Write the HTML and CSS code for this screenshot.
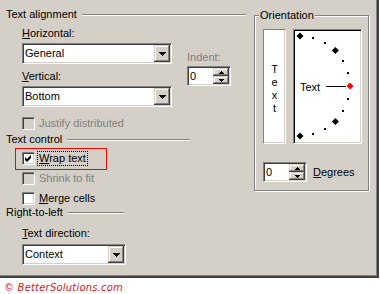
FILE: index.html
```html
<!DOCTYPE html>
<html lang="en">
<head>
  <meta charset="UTF-8">
  <title>Format Cells - Alignment</title>
  <link rel="stylesheet" href="styles.css">
</head>
<body>
  <div class="dialog">
    <div class="left">
      <div class="group-title title-align"><span>Text alignment</span><i class="rule"></i></div>
      <div class="align-body">
        <div class="align-main">
          <div class="label"><u>H</u>orizontal:</div>
          <div class="combo">
            <span class="combo-value">General</span>
            <span class="drop"><svg width="7" height="4" viewBox="0 0 7 4"><polygon points="0,0 7,0 3.5,4" /></svg></span>
          </div>
          <div class="label label-gap"><u>V</u>ertical:</div>
          <div class="combo">
            <span class="combo-value">Bottom</span>
            <span class="drop"><svg width="7" height="4" viewBox="0 0 7 4"><polygon points="0,0 7,0 3.5,4" /></svg></span>
          </div>
          <div class="check disabled justify"><span class="box"></span><span>Justify distributed</span></div>
        </div>
        <div class="indent">
          <div class="label disabled">Indent:</div>
          <div class="spin">
            <span class="spin-value">0</span>
            <span class="spin-btns">
              <span class="spin-btn"><svg width="5" height="3" viewBox="0 0 5 3"><polygon points="2.5,0 5,3 0,3" /></svg></span>
              <span class="spin-btn"><svg width="5" height="3" viewBox="0 0 5 3"><polygon points="0,0 5,0 2.5,3" /></svg></span>
            </span>
          </div>
        </div>
      </div>

      <div class="group-title title-control"><span>Text control</span><i class="rule"></i></div>
      <div class="checks">
        <div class="check wrap-row">
          <span class="box"><svg width="9" height="9" viewBox="0 0 9 9"><path d="M1 3 L3 5 L7 1 L7 4 L3 8 L1 6 Z" /></svg></span>
          <span class="focus"><u>W</u>rap text</span>
          <span class="mark"></span>
        </div>
        <div class="check disabled"><span class="box"></span><span>Shrink to fit</span></div>
        <div class="check"><span class="box"></span><span><u>M</u>erge cells</span></div>
      </div>

      <div class="group-title title-rtl"><span>Right-to-left</span><i class="rule"></i></div>
      <div class="rtl-body">
        <div class="label"><u>T</u>ext direction:</div>
        <div class="combo combo-short">
          <span class="combo-value">Context</span>
          <span class="drop"><svg width="7" height="4" viewBox="0 0 7 4"><polygon points="0,0 7,0 3.5,4" /></svg></span>
        </div>
      </div>
    </div>

    <div class="right">
      <div class="orient">
        <span class="legend">Orientation</span>
        <div class="orient-row">
          <div class="vtext"><span>T</span><span>e</span><span>x</span><span>t</span></div>
          <div class="arc">
            <svg width="65" height="111" viewBox="0 0 65 111">
              <polygon points="5,1.5 8.5,5 5,8.5 1.5,5" />
              <polygon points="40.4,16.1 43.9,19.6 40.4,23.1 36.9,19.6" />
              <polygon points="40.4,86.9 43.9,90.4 40.4,93.9 36.9,90.4" />
              <polygon points="5,101.5 8.5,105 5,108.5 1.5,105" />
              <rect x="17" y="6" width="2" height="2" />
              <rect x="29" y="11" width="2" height="2" />
              <rect x="47" y="29" width="2" height="2" />
              <rect x="52" y="41" width="2" height="2" />
              <rect x="52" y="67" width="2" height="2" />
              <rect x="47" y="79" width="2" height="2" />
              <rect x="29" y="97" width="2" height="2" />
              <rect x="17" y="102" width="2" height="2" />
              <text x="5" y="60" class="arc-label">Text</text>
              <rect x="31" y="55" width="20" height="1" />
              <polygon points="55,51.5 58.5,55 55,58.5 51.5,55" fill="#ff0000" />
            </svg>
          </div>
        </div>
        <div class="degrees-row">
          <div class="spin">
            <span class="spin-value">0</span>
            <span class="spin-btns">
              <span class="spin-btn"><svg width="5" height="3" viewBox="0 0 5 3"><polygon points="2.5,0 5,3 0,3" /></svg></span>
              <span class="spin-btn"><svg width="5" height="3" viewBox="0 0 5 3"><polygon points="0,0 5,0 2.5,3" /></svg></span>
            </span>
          </div>
          <span><u>D</u>egrees</span>
        </div>
      </div>
    </div>
  </div>

  <div class="credit">© BetterSolutions.com</div>
</body>
</html>
```

FILE: styles.css
```css
* {
  box-sizing: border-box;
}
body {
  margin: 0;
  background: #fff;
  font-family: "Liberation Sans", Arial, sans-serif;
  font-size: 11px;
  line-height: 13px;
  color: #000;
}
u {
  text-decoration: underline;
  text-underline-offset: 1px;
}
.dialog {
  display: flex;
  width: 379px;
  height: 278px;
  background: #d4d0c8;
  border-right: 2px solid #404040;
  border-bottom: 2px solid #404040;
  box-shadow: inset -1px -1px #808080;
}
.left {
  width: 254px;
  padding: 8px 0 0 6px;
}

/* group headers with etched line */
.group-title {
  display: flex;
  align-items: center;
  gap: 5px;
}
.rule {
  flex: 1;
  height: 2px;
  border-top: 1px solid #808080;
  border-bottom: 1px solid #fff;
}
.title-align { width: 240px; }
.title-control { width: 184px; margin-top: 3px; }
.title-rtl { width: 118px; margin-top: 1px; }

.align-body {
  display: flex;
  margin: 6px 0 0 16px;
}
.align-main {
  width: 150px;
}
.label {
  margin-bottom: 3px;
}
.label-gap {
  margin-top: 6px;
}
.disabled {
  color: #808080;
}

/* combobox */
.combo {
  display: flex;
  height: 21px;
  padding: 1px;
  background: #fff;
  border: 1px solid;
  border-color: #808080 #fff #fff #808080;
  box-shadow: inset 1px 1px #404040, inset -1px -1px #d4d0c8;
}
.combo-short {
  width: 104px;
}
.combo-value {
  flex: 1;
  padding-left: 1px;
  line-height: 17px;
}
.drop, .spin-btn {
  display: flex;
  align-items: center;
  justify-content: center;
  background: #d4d0c8;
  box-shadow: inset -1px -1px #404040, inset 1px 1px #d4d0c8, inset -2px -2px #808080, inset 2px 2px #fff;
}
.drop {
  width: 16px;
  height: 17px;
}
.drop svg, .spin-btn svg {
  shape-rendering: crispEdges;
}

/* checkboxes */
.check {
  position: relative;
  display: flex;
  align-items: center;
  gap: 4px;
  height: 13px;
}
.justify {
  margin-top: 10px;
}
.box {
  display: flex;
  align-items: center;
  justify-content: center;
  width: 13px;
  height: 13px;
  background: #fff;
  border: 1px solid;
  border-color: #808080 #fff #fff #808080;
  box-shadow: inset 1px 1px #404040, inset -1px -1px #d4d0c8;
}
.disabled .box {
  background: #d4d0c8;
}
.checks {
  margin-left: 16px;
}
.checks .check {
  margin-top: 7px;
}
.checks .check:first-child {
  margin-top: 6px;
}
.focus {
  margin-left: -1px;
  padding: 0 1px;
  outline: 1px dotted #000;
}
.mark {
  position: absolute;
  left: -7px;
  top: -4px;
  width: 92px;
  height: 22px;
  border: 1px solid #f00;
}

/* indent spinner */
.indent {
  margin: 24px 0 0 15px;
}
.indent .label {
  margin-bottom: 2px;
}
.spin {
  display: flex;
  width: 44px;
  height: 20px;
  padding: 1px;
  background: #fff;
  border: 1px solid;
  border-color: #808080 #fff #fff #808080;
  box-shadow: inset 1px 1px #404040, inset -1px -1px #d4d0c8;
}
.spin-value {
  flex: 1;
  padding-left: 1px;
  line-height: 16px;
}
.spin-btns {
  display: flex;
  flex-direction: column;
  width: 16px;
}
.spin-btn {
  height: 8px;
}

.rtl-body {
  margin: 8px 0 0 16px;
}
.rtl-body .label {
  margin-bottom: 4px;
}

/* orientation group */
.right {
  padding-top: 15px;
}
.orient {
  position: relative;
  width: 115px;
  height: 176px;
  padding: 13px 0 0 8px;
  border: 1px solid #808080;
  box-shadow: inset 1px 1px #fff, 1px 1px #fff;
}
.legend {
  position: absolute;
  top: -7px;
  left: 4px;
  padding: 0 1px;
  background: #d4d0c8;
}
.orient-row {
  display: flex;
  gap: 7px;
}
.vtext {
  display: flex;
  flex-direction: column;
  align-items: center;
  justify-content: center;
  width: 23px;
  height: 115px;
  padding-top: 4px;
  background: #fff;
  border: 1px solid;
  border-color: #808080 #fff #fff #808080;
  box-shadow: inset -1px -1px #d4d0c8;
}
.arc {
  width: 69px;
  height: 115px;
  background: #fff;
  border: 1px solid;
  border-color: #808080 #fff #fff #808080;
  box-shadow: inset 1px 1px #000, inset -1px -1px #d4d0c8;
  padding: 1px;
}
.arc svg {
  display: block;
}
.arc-label {
  font-family: "Liberation Sans", Arial, sans-serif;
  font-size: 11px;
}
.degrees-row {
  display: flex;
  align-items: center;
  gap: 6px;
  margin-top: 18px;
}

.credit {
  padding: 3px 0 0 4px;
  color: #e8141c;
  font-family: "DejaVu Sans", sans-serif;
  font-style: italic;
  font-size: 10px;
  letter-spacing: 0.2px;
}
```
